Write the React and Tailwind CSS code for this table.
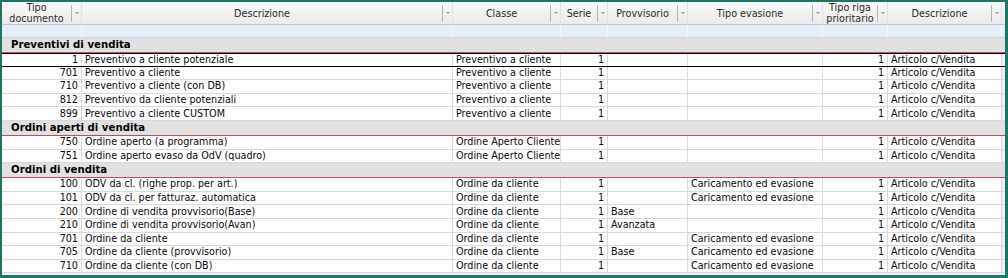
import React from "react";

const W = ["w-[80px]", "w-[371px]", "w-[108px]", "w-[47px]", "w-[80px]", "w-[135px]", "w-[65px]", "w-[114px]"];

const headers = [
  ["Tipo", "documento"],
  ["Descrizione"],
  ["Classe"],
  ["Serie"],
  ["Provvisorio"],
  ["Tipo evasione"],
  ["Tipo riga", "prioritario"],
  ["Descrizione"],
];

const groups = [
  {
    title: "Preventivi di vendita",
    rows: [
      ["1", "Preventivo a cliente potenziale", "Preventivo a cliente", "1", "", "", "1", "Articolo c/Vendita"],
      ["701", "Preventivo a cliente", "Preventivo a cliente", "1", "", "", "1", "Articolo c/Vendita"],
      ["710", "Preventivo a cliente (con DB)", "Preventivo a cliente", "1", "", "", "1", "Articolo c/Vendita"],
      ["812", "Preventivo da cliente potenziali", "Preventivo a cliente", "1", "", "", "1", "Articolo c/Vendita"],
      ["899", "Preventivo a cliente CUSTOM", "Preventivo a cliente", "1", "", "", "1", "Articolo c/Vendita"],
    ],
  },
  {
    title: "Ordini aperti di vendita",
    rows: [
      ["750", "Ordine aperto (a programma)", "Ordine Aperto Cliente", "1", "", "", "1", "Articolo c/Vendita"],
      ["751", "Ordine aperto evaso da OdV (quadro)", "Ordine Aperto Cliente", "1", "", "", "1", "Articolo c/Vendita"],
    ],
  },
  {
    title: "Ordini di vendita",
    rows: [
      ["100", "ODV da cl. (righe prop. per art.)", "Ordine da cliente", "1", "", "Caricamento ed evasione", "1", "Articolo c/Vendita"],
      ["101", "ODV da cl. per fatturaz. automatica", "Ordine da cliente", "1", "", "Caricamento ed evasione", "1", "Articolo c/Vendita"],
      ["200", "Ordine di vendita provvisorio(Base)", "Ordine da cliente", "1", "Base", "", "1", "Articolo c/Vendita"],
      ["210", "Ordine di vendita provvisorio(Avan)", "Ordine da cliente", "1", "Avanzata", "", "1", "Articolo c/Vendita"],
      ["701", "Ordine da cliente", "Ordine da cliente", "1", "", "Caricamento ed evasione", "1", "Articolo c/Vendita"],
      ["705", "Ordine da cliente (provvisorio)", "Ordine da cliente", "1", "Base", "Caricamento ed evasione", "1", "Articolo c/Vendita"],
      ["710", "Ordine da cliente (con DB)", "Ordine da cliente", "1", "", "Caricamento ed evasione", "1", "Articolo c/Vendita"],
    ],
  },
];

const RIGHT = [true, false, false, true, false, false, true, false];

function HeaderCell({ lines, w }) {
  return (
    <div className={`${w} shrink-0 h-full flex items-center border-r border-[#e2e2e2]`}>
      <div className="flex-1 flex flex-col items-center justify-center leading-[11px] text-[#2a2a2a]">
        {lines.map((l, i) => (
          <span key={i}>{l}</span>
        ))}
      </div>
      <div className="w-[10px] h-[17px] flex items-center shrink-0">
        <div className="w-px h-full bg-[#b4b4b4]" />
        <svg width="6" height="4" viewBox="0 0 6 4" className="ml-[2px]">
          <path d="M1 1 L5 1 L3 3 Z" fill="#9a9a9a" />
        </svg>
      </div>
    </div>
  );
}

function Row({ cells, focus }) {
  return (
    <div
      className={`flex h-[13.6px] shrink-0 ${
        focus ? "border-y border-black" : "border-b border-[#d9d9d9]"
      }`}
    >
      {cells.map((c, i) => (
        <div
          key={i}
          className={`${W[i]} shrink-0 h-full border-r border-[#d9d9d9] overflow-hidden whitespace-nowrap px-[3px] flex items-center ${
            RIGHT[i] ? "justify-end" : "justify-start"
          }`}
        >
          {c}
        </div>
      ))}
      <div className="flex-1 bg-[#f0f0f0]" />
    </div>
  );
}

export default function App() {
  return (
    <div
      className="w-[1008px] h-[278px] border-[#1d7566] border-2 border-b-[3px] border-r-[3px] bg-[#f0f0f0] overflow-hidden text-[10.7px] text-[#0a0a0a] flex flex-col"
      style={{ fontFamily: '"DejaVu Sans Condensed", "DejaVu Sans", Tahoma, sans-serif' }}
    >
      <div className="flex h-[23px] shrink-0 bg-gradient-to-b from-[#f8f8f8] to-[#ebebeb] border-b border-[#c6c6c6]">
        {headers.map((h, i) => (
          <HeaderCell key={i} lines={h} w={W[i]} />
        ))}
        <div className="flex-1" />
      </div>
      <div className="flex h-[13px] shrink-0 bg-[#e4edf8] border-b border-[#cfd6df]">
        {W.map((w, i) => (
          <div key={i} className={`${w} shrink-0 h-full border-r border-[#f4f7fb]`} />
        ))}
        <div className="flex-1" />
      </div>
      {groups.map((g, gi) => (
        <React.Fragment key={gi}>
          <div className="h-[15px] shrink-0 bg-[#e1e1e1] border-b border-[#b9505c] flex items-center pl-[9px] font-bold text-[11.3px] text-black">
            {g.title}
          </div>
          {g.rows.map((r, ri) => (
            <div key={ri} className="bg-white">
              <Row cells={r} focus={gi === 0 && ri === 0} />
            </div>
          ))}
        </React.Fragment>
      ))}
      <div className="flex-1 bg-[#f0f0f0]" />
    </div>
  );
}
